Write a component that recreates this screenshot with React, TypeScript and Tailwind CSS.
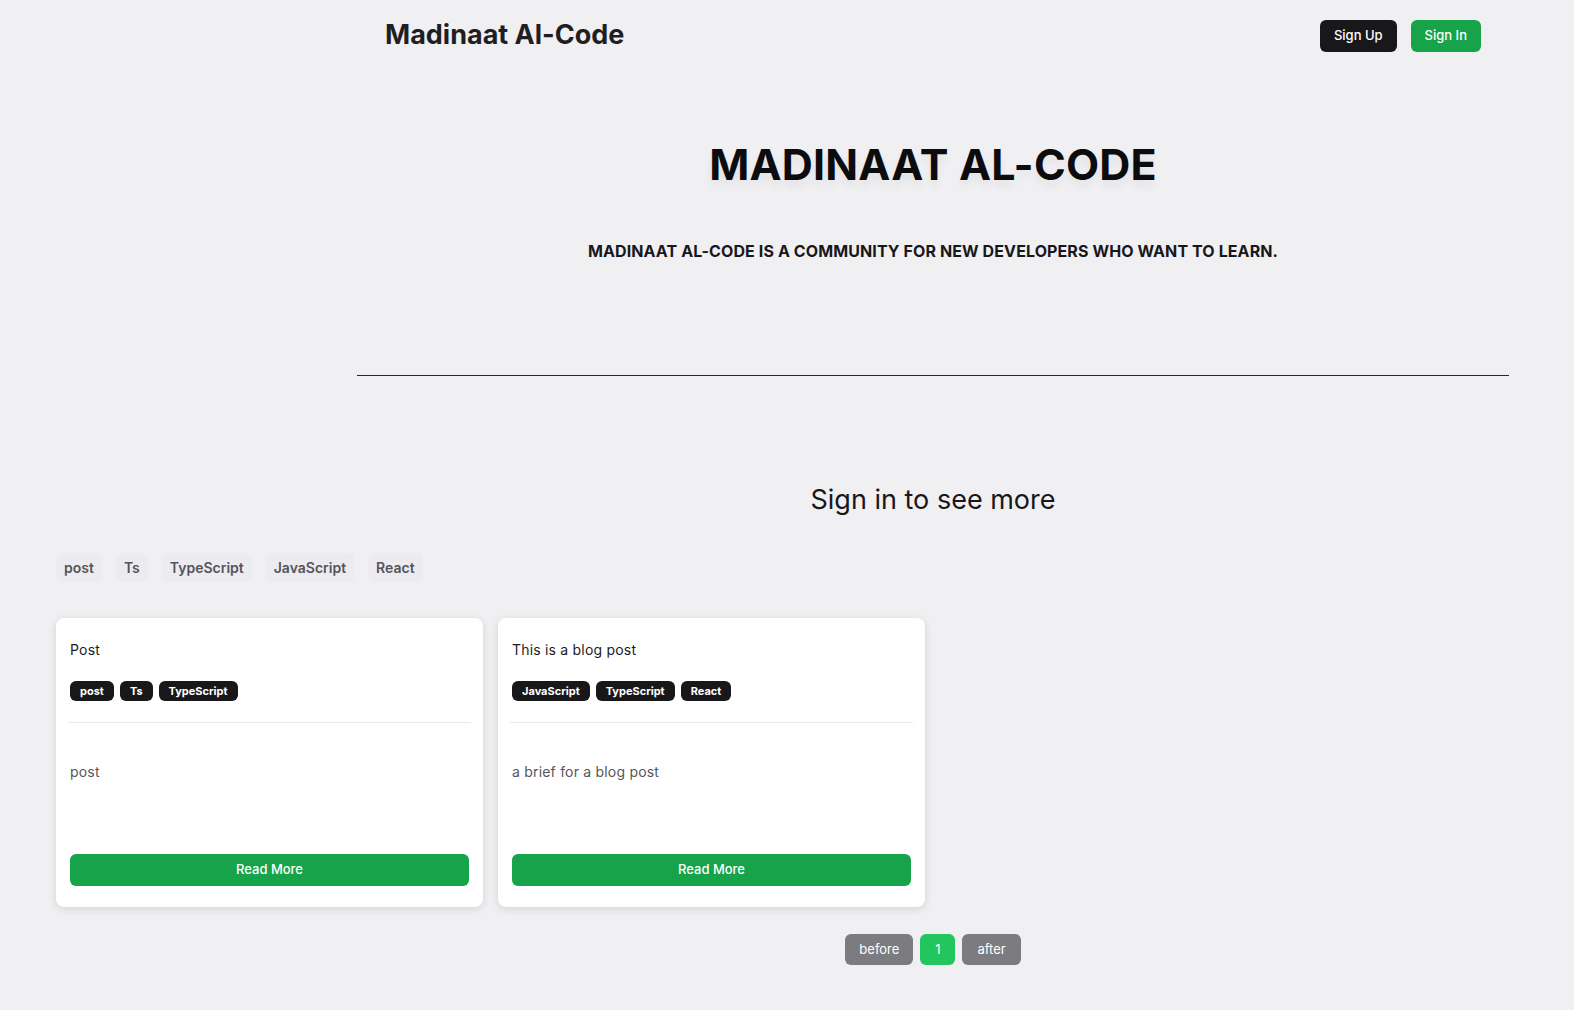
import React from 'react'

const posts = [
  { title: 'Post', tags: ['post', 'Ts', 'TypeScript'], brief: 'post' },
  { title: 'This is a blog post', tags: ['JavaScript', 'TypeScript', 'React'], brief: 'a brief for a blog post' }
]

const allTags = ['post', 'Ts', 'TypeScript', 'JavaScript', 'React']

const PostCard: React.FC<{ title: string; tags: string[]; brief: string }> = ({ title, tags, brief }) => (
  <div className="w-[427px] h-[289px] bg-white rounded-lg shadow-[0_2px_8px_rgba(0,0,0,0.12)] px-3.5 pt-[21px] pb-[21px] flex flex-col">
    <h3 className="text-sm leading-[22px] tracking-[0.2px] text-[#1c1c1f]">{title}</h3>
    <div className="flex gap-[6px] mt-5">
      {tags.map((tag) => (
        <span key={tag} className="h-5 px-2.5 flex items-center rounded-md bg-[#18181b] text-white text-[11px] font-bold">
          {tag}
        </span>
      ))}
    </div>
    <div className="h-px bg-[#e8e8ea] mt-[21px] -mx-0.5" />
    <p className="text-sm leading-5 text-[#56565c] mt-[39px] tracking-[0.2px]">{brief}</p>
    <button className="mt-auto h-8 w-full rounded-md bg-[#16a34a] text-white text-[13px] font-medium">
      Read More
    </button>
  </div>
)

export default function App() {
  return (
    <div className="min-h-[1010px] bg-[#f0eff2] font-['Inter','Liberation_Sans',sans-serif] text-[#18181b]">
      {/* Header */}
      <header className="ml-[357px] w-[1152px] h-[70px] px-7 flex items-center justify-between">
        <h1 className="text-[27px] font-bold text-[#1f1f22]">Madinaat Al-Code</h1>
        <div className="flex items-center gap-[14px] mt-0.5">
          <button className="h-8 px-3.5 rounded-md bg-[#18181b] text-white text-[13px] font-medium">Sign Up</button>
          <button className="h-8 px-3.5 rounded-md bg-[#16a34a] text-white text-[13px] font-medium">Sign In</button>
        </div>
      </header>

      {/* Hero */}
      <section className="ml-[357px] w-[1152px] flex flex-col items-center">
        <h2 className="mt-[70px] text-[43px] leading-[48px] font-bold tracking-[0.2px] text-[#0c0c0e] [text-shadow:0_6px_8px_rgba(0,0,0,0.06)]">
          MADINAAT AL-CODE
        </h2>
        <p className="mt-[51px] text-base leading-6 font-bold uppercase tracking-[0.1px] text-[#18181b]">
          Madinaat Al-Code is a community for new developers who want to learn.
        </p>
        <div className="w-full h-px bg-[#27272a] mt-[112px]" />
        <h3 className="mt-[106px] text-[27px] leading-9 text-[#18181b]">Sign in to see more</h3>
      </section>

      {/* Tags */}
      <div className="px-14 mt-[35px] flex gap-[14px]">
        {allTags.map((tag) => (
          <span key={tag} className="h-[29px] px-2 flex items-center rounded-md bg-[#ecebef] text-sm font-semibold text-[#55555b]">
            {tag}
          </span>
        ))}
      </div>

      {/* Posts */}
      <div className="px-14 mt-9 flex gap-[15px]">
        {posts.map((p) => (
          <PostCard key={p.title} {...p} />
        ))}
      </div>

      {/* Pagination */}
      <div className="ml-[357px] w-[1152px] mt-[27px] pb-11 flex justify-center gap-[7px]">
        <button className="h-[31px] px-3.5 rounded-md bg-[#7c7b80] text-white text-[13px]">before</button>
        <button className="h-[31px] w-[35px] rounded-md bg-[#22c55e] text-white text-[13px]">1</button>
        <button className="h-[31px] px-[15px] rounded-md bg-[#7c7b80] text-white text-[13px]">after</button>
      </div>
    </div>
  )
}
